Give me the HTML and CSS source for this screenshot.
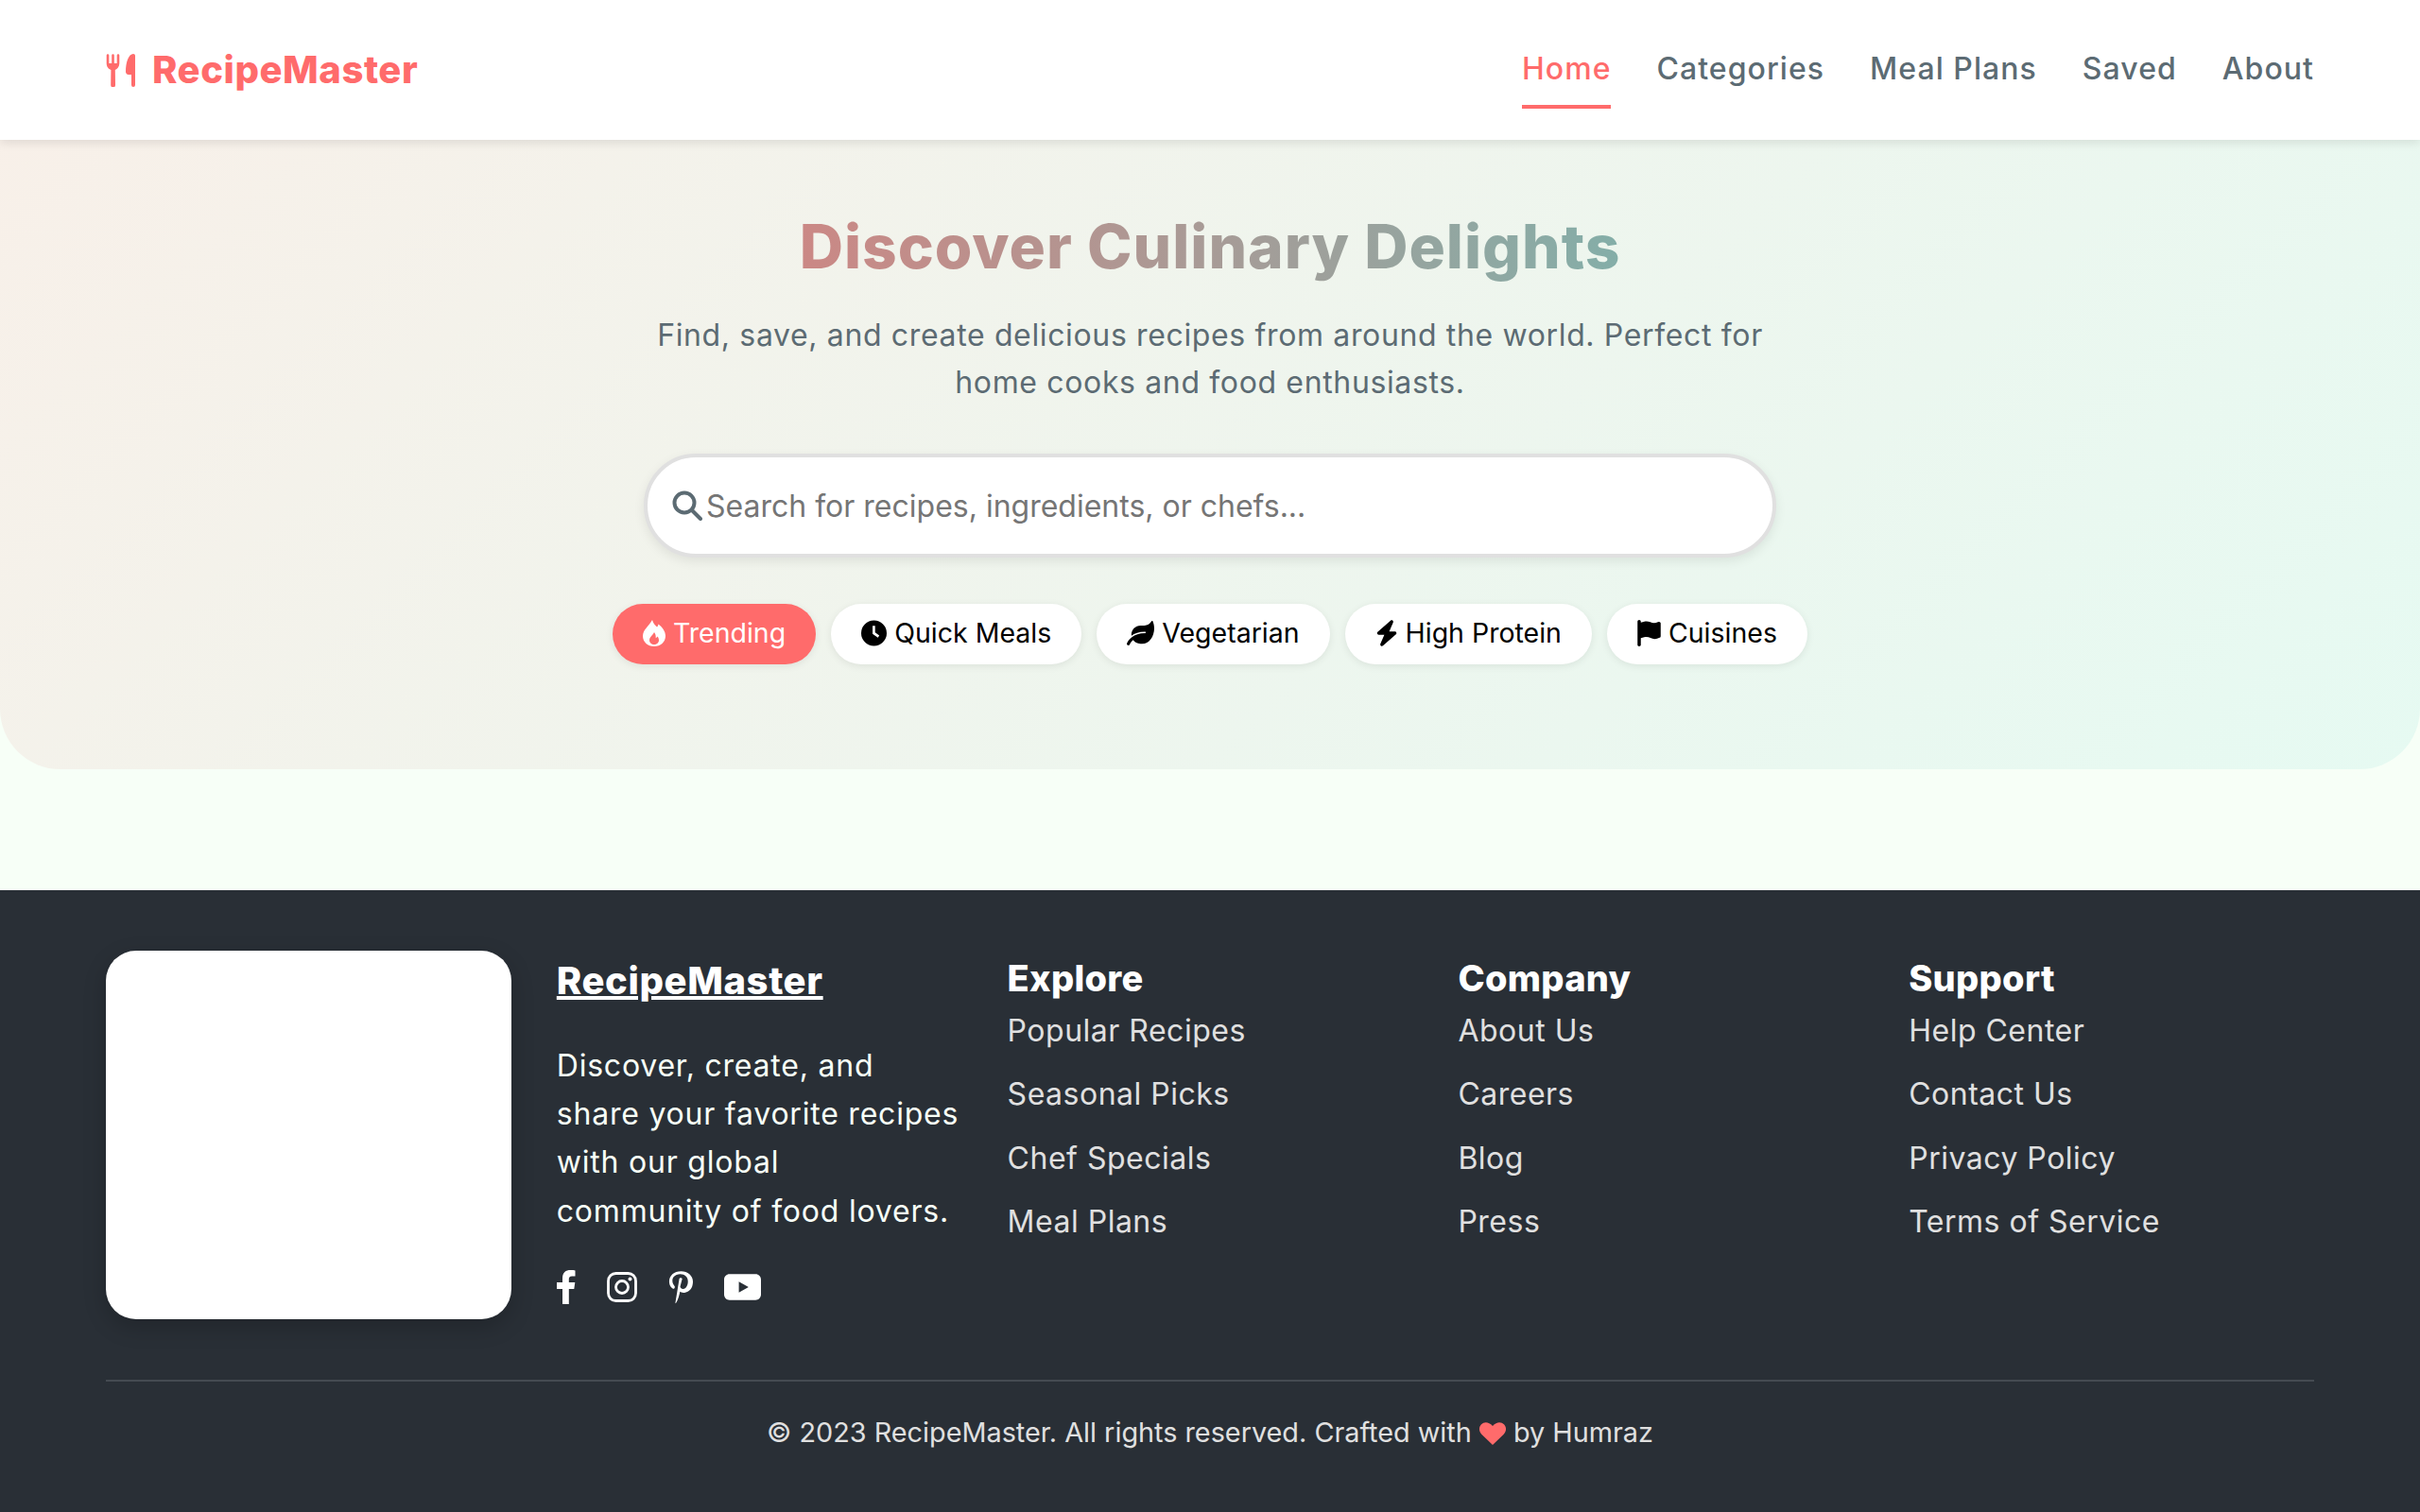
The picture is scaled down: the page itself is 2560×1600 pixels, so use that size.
FILE: index.html
```html
<!DOCTYPE html>
<html lang="en">
<head>
<meta charset="utf-8">
<title>RecipeMaster</title>
<link rel="stylesheet" href="styles.css">
</head>
<body>
<header class="navbar">
  <a class="logo" href="#">
    <svg class="logo-icon" viewBox="0 0 32 36" aria-hidden="true"><path d="M.7 11V2.500a1.300 1.300 0 0 1 2.600 0V11h2.900V2.500a1.300 1.300 0 0 1 2.600 0V11h2.900V2.500a1.300 1.300 0 0 1 2.600 0V11c0 3.800-2.200 6.200-4.500 7L10 34a2.400 2.400 0 0 1-4.800 0l.2-16C3 17.200.7 14.800.7 11zM29 1c1.200 0 2 .8 2 2v31a2 2 0 0 1-4 0V23h-3c-2 0-3-1.500-3-3C21 10 24 1 29 1z"/></svg>
    <span>RecipeMaster</span>
  </a>
  <nav class="nav-links">
    <a class="nav-link active" href="#">Home</a>
    <a class="nav-link" href="#">Categories</a>
    <a class="nav-link" href="#">Meal Plans</a>
    <a class="nav-link" href="#">Saved</a>
    <a class="nav-link" href="#">About</a>
  </nav>
</header>
<main>
  <section class="hero">
    <h1 class="hero-title">Discover Culinary Delights</h1>
    <p class="hero-text">Find, save, and create delicious recipes from around the world. Perfect for home cooks and food enthusiasts.</p>
    <div class="search">
      <svg class="search-icon" viewBox="0 0 32 32" aria-hidden="true"><circle cx="13" cy="13" r="10.500" fill="none" stroke="currentColor" stroke-width="4"/><path d="M21 21l9 9" stroke="currentColor" stroke-width="4" stroke-linecap="round"/></svg>
      <input class="search-input" type="text" placeholder="Search for recipes, ingredients, or chefs...">
    </div>
    <div class="chips">
      <button class="chip chip-active"><svg class="chip-icon" viewBox="0 0 24 28"><path fill-rule="evenodd" d="M10 0c1 4 3 5.500 5 7.500.8-.8 1.300-1.700 1.500-3C20.500 7.500 24 12 24 17c0 6.500-5.300 11-12 11S0 23.500 0 17C0 10.500 6 7 10 0zm2 13c-1 3-5 5-5 8.500 0 2.700 2.200 4.500 5 4.500s5-1.800 5-4.500c0-1.500-.6-3-1.500-4-.5.8-1 1.300-1.800 1.700C13.800 16.500 13.500 15 12 13z"/></svg>Trending</button>
      <button class="chip"><svg class="chip-icon chip-icon-clock" viewBox="0 0 28 28"><path fill-rule="evenodd" d="M14 0a14 14 0 1 1 0 28a14 14 0 0 1 0-28zm-1.500 6v8.800l5.800 4 1.600-2.300-4.600-3.200V6z"/></svg>Quick Meals</button>
      <button class="chip"><svg class="chip-icon chip-icon-wide" viewBox="0 0 576 512"><path d="M546.200 9.700c-5.600-12.500-21.600-13-28.300-1.200C486.900 62.400 431.400 96 368 96h-80C182 96 96 182 96 288c0 7 .8 13.700 1.500 20.500C161.300 262.800 253.400 224 384 224c8.800 0 16 7.200 16 16s-7.200 16-16 16C132.600 256 26 410.100 2.400 468c-6.600 16.300 1.200 34.900 17.500 41.600 16.400 6.800 35-1.100 41.800-17.300 1.500-3.600 20.900-47.900 71.900-90.600 32.400 43.900 94 85.800 174.900 77.200C465.500 488.500 576 326.500 576 154.300c0-50.100-10.800-102.200-29.800-144.600z"/></svg>Vegetarian</button>
      <button class="chip"><svg class="chip-icon" viewBox="0 0 448 512"><path d="M349.400 44.600c5.900-13.700 1.500-29.700-10.600-38.500s-28.600-8-39.900 1.800l-256 224c-10 8.800-13.600 22.900-8.900 35.300S50.700 288 64 288H175.500L98.600 467.400c-5.900 13.700-1.500 29.700 10.600 38.500s28.600 8 39.900-1.800l256-224c10-8.800 13.600-22.900 8.900-35.300s-16.600-20.700-30-20.700H272.500L349.400 44.600z"/></svg>High Protein</button>
      <button class="chip"><svg class="chip-icon chip-icon-flag" viewBox="0 0 448 512"><path d="M64 32C64 14.300 49.700 0 32 0S0 14.300 0 32V64 368 480c0 17.700 14.300 32 32 32s32-14.300 32-32V352l64.300-16.100c41.100-10.300 84.600-5.500 122.500 13.400c44.200 22.100 95.500 24.800 141.700 7.400l34.700-13c12.500-4.700 20.800-16.600 20.800-30V66.100c0-23-24.200-38-44.800-27.700l-9.600 4.800c-46.300 23.200-100.800 23.200-147.100 0c-35.100-17.600-75.400-22-113.500-12.500L64 48V32z"/></svg>Cuisines</button>
    </div>
  </section>
</main>
<footer class="footer">
  <div class="footer-grid">
    <div class="footer-card"></div>
    <div class="footer-about">
      <a class="footer-brand" href="#">RecipeMaster</a>
      <p class="footer-desc">Discover, create, and<br>share your favorite recipes<br>with our global<br>community of food lovers.</p>
      <div class="socials">
        <svg class="social social-fb" viewBox="0 0 20 36"><path d="M6 36V20H0v-7h6V8.500C6 2.500 9.500 0 14.500 0c2 0 4 .2 5 .4v6h-3.400c-2.700 0-3.300 1.400-3.300 3.300V13h6.500l-1 7h-5.500v16z"/></svg>
        <svg class="social social-ig" viewBox="0 0 32 32"><rect x="1.500" y="1.500" width="29" height="29" rx="8" fill="none" stroke="currentColor" stroke-width="2.800"/><circle cx="16" cy="16" r="6.500" fill="none" stroke="currentColor" stroke-width="2.800"/><circle cx="24.500" cy="7.500" r="2"/></svg>
        <svg class="social social-pin" viewBox="0 0 28 36"><path d="M14.500 0C6.500 0 1 5 1 11.500c0 4 2 7.500 5 8.500.8.300 1.800-2 1.300-2.800C4 13.500 4 9 6 6.500c3.500-4 10.500-4.300 14-.8 3.500 3.500 2.800 10-.2 13-2.300 2.300-5.800 1.800-6.300-1.200l2.300-9c-.2-1-3-1.400-3.300-.3L8 36c-.1.700.7.500 1-.1 2-3 3.500-8.500 4.300-12.700 2 1.700 6.300 1.600 9.700-.7C27 20 28 15.500 28 11.500 28 5 22 0 14.500 0z"/></svg>
        <svg class="social social-yt" viewBox="0 0 40 28"><path fill-rule="evenodd" d="M6 0h28c3.500 0 6 2.500 6 6v16c0 3.500-2.500 6-6 6H6c-3.500 0-6-2.500-6-6V6c0-3.500 2.500-6 6-6zm10 8v12l10.500-6z"/></svg>
      </div>
    </div>
    <div class="footer-col">
      <h3 class="footer-heading">Explore</h3>
      <a class="footer-link" href="#">Popular Recipes</a>
      <a class="footer-link" href="#">Seasonal Picks</a>
      <a class="footer-link" href="#">Chef Specials</a>
      <a class="footer-link" href="#">Meal Plans</a>
    </div>
    <div class="footer-col">
      <h3 class="footer-heading">Company</h3>
      <a class="footer-link" href="#">About Us</a>
      <a class="footer-link" href="#">Careers</a>
      <a class="footer-link" href="#">Blog</a>
      <a class="footer-link" href="#">Press</a>
    </div>
    <div class="footer-col">
      <h3 class="footer-heading">Support</h3>
      <a class="footer-link" href="#">Help Center</a>
      <a class="footer-link" href="#">Contact Us</a>
      <a class="footer-link" href="#">Privacy Policy</a>
      <a class="footer-link" href="#">Terms of Service</a>
    </div>
  </div>
  <div class="footer-bottom">© 2023 RecipeMaster. All rights reserved. Crafted with <svg class="heart" viewBox="0 0 28 24"><path d="M14 24L2.500 13C-.8 9.800-.8 5 2 2.200 5-.8 10-.6 14 4c4-4.600 9-4.800 12-1.800 2.800 2.800 2.800 7.600-.5 10.800z"/></svg> by Humraz</div>
</footer>
</body>
</html>
```

FILE: styles.css
```css
* { box-sizing: border-box; margin: 0; padding: 0; }
html, body { height: 100%; }
body {
  display: flex;
  flex-direction: column;
  min-height: 1600px;
  background: #f7fff7;
  font-family: "Inter", "Liberation Sans", sans-serif;
  color: #292f36;
}
a { text-decoration: none; color: inherit; }

.navbar {
  position: relative;
  z-index: 2;
  height: 148px;
  padding: 0 112px;
  display: flex;
  align-items: center;
  justify-content: space-between;
  background: #fff;
  box-shadow: 0 3px 10px rgba(0, 0, 0, 0.1);
}
.logo {
  display: flex;
  align-items: center;
  gap: 17px;
  color: #ff6b6b;
  font-size: 40px;
  font-weight: 800;
  letter-spacing: 0.55px;
  line-height: 48px;
  margin-top: -1px;
}
.logo-icon { width: 32px; height: 36px; fill: #ff6b6b; }
.nav-links { display: flex; gap: 48px; height: 148px; align-items: center; }
.nav-link {
  position: relative;
  top: -1px;
  color: #5c6b73;
  font-size: 32px;
  font-weight: 500;
  line-height: 48px;
  letter-spacing: 1.05px;
}
.nav-link.active { color: #ff6b6b; }
.nav-link.active::after {
  content: "";
  position: absolute;
  left: 0;
  right: 0;
  bottom: -18px;
  height: 4px;
  background: #ff6b6b;
}

.hero {
  height: 666px;
  display: flex;
  flex-direction: column;
  align-items: center;
  padding-top: 65px;
  border-radius: 0 0 64px 64px;
  background: linear-gradient(135deg, rgba(255, 107, 107, 0.1), rgba(78, 205, 196, 0.1));
}
.hero-title {
  font-size: 64px;
  font-weight: 800;
  line-height: 96px;
  letter-spacing: 1px;
  background: linear-gradient(90deg, #cb8885, #84aea8);
  -webkit-background-clip: text;
  background-clip: text;
  color: transparent;
  margin-bottom: 21px;
}
.hero-text {
  width: 1200px;
  font-size: 32px;
  line-height: 50px;
  letter-spacing: 0.64px;
  text-align: center;
  color: #5c6b73;
}
.search {
  margin-top: 50px;
  width: 1198px;
  height: 110px;
  display: flex;
  align-items: center;
  gap: 4px;
  padding: 0 26px;
  background: #fff;
  border: 4px solid #e0e0e0;
  border-radius: 55px;
  box-shadow: 0 4px 12px rgba(0, 0, 0, 0.08);
}
.search-icon { width: 32px; height: 32px; color: #5c6b73; flex: none; }
.search-input {
  flex: 1;
  border: 0;
  outline: 0;
  background: transparent;
  font: 400 32px "Inter", "Liberation Sans", sans-serif;
  color: #292f36;
}
.search-input::placeholder { color: #757575; opacity: 1; }
.chips { display: flex; gap: 16px; margin-top: 49px; }
.chip {
  height: 64px;
  padding: 0 32px 4px;
  display: flex;
  align-items: center;
  gap: 8px;
  border: 0;
  border-radius: 32px;
  background: #fff;
  color: #000;
  font: 400 28.5px "Inter", "Liberation Sans", sans-serif;
  box-shadow: 0 2px 8px rgba(0, 0, 0, 0.08);
}
.chip-active { background: #ff6b6b; color: #fff; }
.chip-icon { height: 28px; width: 24px; fill: currentColor; flex: none; position: relative; top: 1px; }
.chip-icon-clock { width: 27px; }
.chip-icon-wide { width: 29px; }
.chip-icon-flag { width: 25px; }

.footer {
  margin-top: auto;
  height: 658px;
  padding: 64px 112px 0;
  background: #292f36;
  color: #f0f0f0;
}
.footer-grid {
  display: grid;
  grid-template-columns: repeat(5, 1fr);
  gap: 48px;
  height: 390px;
}
.footer-card {
  background: #fff;
  border-radius: 32px;
  box-shadow: 0 8px 24px rgba(0, 0, 0, 0.2);
}
.footer-brand {
  display: block;
  font-size: 40px;
  font-weight: 800;
  line-height: 64px;
  letter-spacing: 0.6px;
  color: #fff;
  text-decoration: underline;
}
.footer-desc {
  margin-top: 32px;
  font-size: 32px;
  line-height: 51.2px;
  letter-spacing: 0.78px;
  white-space: nowrap;
  color: #f7fff7;
}
.socials { display: flex; align-items: center; gap: 33px; margin-top: 37px; height: 36px; }
.social { fill: #fff; height: 36px; flex: none; color: #fff; }
.social-fb { width: 20px; }
.social-ig { width: 32px; height: 32px; }
.social-pin { width: 26px; }
.social-yt { width: 39px; height: 28px; }
.footer-col { display: flex; flex-direction: column; align-items: flex-start; }
.footer-heading {
  font-size: 38px;
  font-weight: 800;
  line-height: 58px;
  letter-spacing: 0.3px;
  margin-bottom: 3px;
  color: #fff;
}
.footer-link {
  font-size: 32px;
  line-height: 48px;
  letter-spacing: 0.5px;
  margin-bottom: 19.300px;
  color: #e0e0e0;
}
.footer-bottom {
  margin-top: 64px;
  padding-top: 32px;
  border-top: 2px solid #454b52;
  text-align: center;
  font-size: 28.8px;
  line-height: 44px;
  color: #e0e0e0;
}
.heart { width: 28px; height: 24px; fill: #ff6b6b; vertical-align: -3px; }
```
